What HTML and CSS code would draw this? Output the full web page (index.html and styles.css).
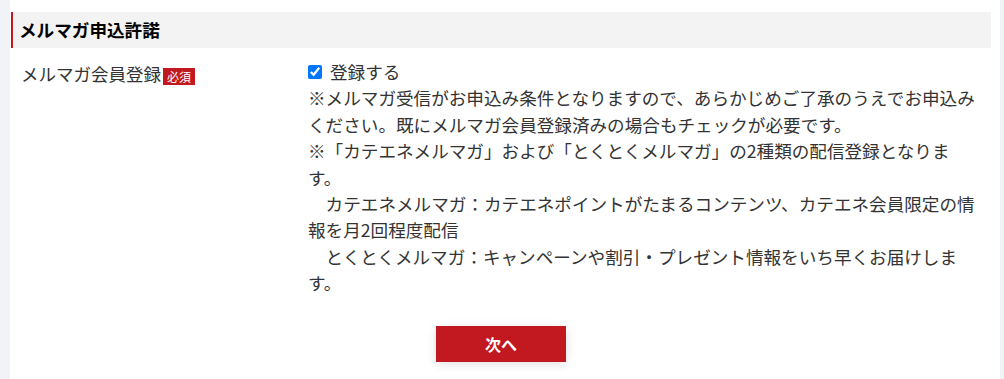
FILE: index.html
```html
<!DOCTYPE html>
<html lang="ja">
<head>
<meta charset="utf-8">
<title>メルマガ申込許諾</title>
<link rel="stylesheet" href="styles.css">
</head>
<body>
<div class="page">
  <div class="inner">
    <h2 class="section-title">メルマガ申込許諾</h2>
    <div class="form-row">
      <div class="label">メルマガ会員登録<span class="badge">必須</span></div>
      <div class="value">
        <label class="check"><input type="checkbox" checked><span>登録する</span></label>
        <p class="note">※メルマガ受信がお申込み条件となりますので、あらかじめご了承のうえでお申込みください。既にメルマガ会員登録済みの場合もチェックが必要です。<br>※「カテエネメルマガ」および「とくとくメルマガ」の2種類の配信登録となります。<br>　カテエネメルマガ：カテエネポイントがたまるコンテンツ、カテエネ会員限定の情報を月2回程度配信<br>　とくとくメルマガ：キャンペーンや割引・プレゼント情報をいち早くお届けします。</p>
      </div>
    </div>
    <div class="actions">
      <button class="btn-next" type="button">次へ</button>
    </div>
  </div>
</div>
</body>
</html>
```

FILE: styles.css
```css
html, body {
  margin: 0;
  padding: 0;
}
body {
  background: #f1f3f6;
  font-family: "Noto Sans CJK JP", "Noto Sans", sans-serif;
  color: #333;
  height: 379px;
  overflow: hidden;
}
.page {
  margin-left: 10px;
  width: 990px;
  background: #fff;
  min-height: 379px;
  padding-top: 12px;
  box-sizing: border-box;
}
.inner {
  margin-left: 1px;
  width: 980px;
}
.section-title {
  margin: 0;
  height: 36px;
  box-sizing: border-box;
  background: #f3f3f3;
  border-left: 2px solid #c1191f;
  padding-left: 6px;
  font-size: 17.6px;
  font-weight: bold;
  color: #000;
  line-height: 36px;
}
.form-row {
  display: flex;
  padding-top: 11px;
}
.label {
  width: 297px;
  padding-left: 10px;
  padding-top: 2px;
  box-sizing: border-box;
  font-size: 17.5px;
  line-height: 26px;
  display: flex;
  align-items: center;
  align-self: flex-start;
}
.badge {
  display: inline-block;
  margin-left: 2px;
  margin-top: 4px;
  background: #c1191f;
  color: #fff;
  font-size: 12px;
  line-height: 17px;
  height: 17px;
  padding: 0 4px;
}
.value {
  width: 672px;
  font-size: 17.6px;
  line-height: 26.4px;
}
.check {
  display: flex;
  align-items: center;
  height: 26.4px;
}
.check input {
  margin: 0 8px 0 0;
  width: 14px;
  height: 14px;
  accent-color: #0075ff;
}
.note {
  margin: 0;
}
.actions {
  display: flex;
  justify-content: center;
  padding-top: 29px;
}
.btn-next {
  width: 130px;
  height: 36px;
  border: none;
  background: #c1191f;
  color: #fff;
  font-family: inherit;
  font-size: 16px;
  font-weight: bold;
  box-shadow: 0 2px 10px rgba(0,0,0,0.12);
  cursor: pointer;
}
```
